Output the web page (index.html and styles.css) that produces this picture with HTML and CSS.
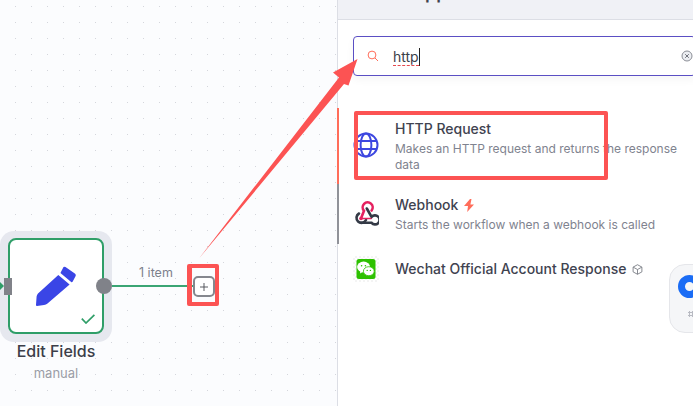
FILE: index.html
```html
<!DOCTYPE html>
<html lang="en">
<head>
<meta charset="utf-8">
<title>Node creator</title>
<link rel="stylesheet" href="styles.css">
</head>
<body>
<div class="app">
  <section class="canvas">
    <div class="halo">
      <div class="node">
        <svg class="pencil" viewBox="0 0 40 40"><path d="M27.500 1 Q28.500 0.300 29.500 1 L38.800 7.500 Q40.300 8.700 39.500 10.300 L36.600 15.800 Q36 16.600 35.200 16 L25 7.600 Q24.300 7 24.800 6.200Z M22.300 9 L33.600 18.400 L11.500 37.500 Q10 38.700 8 38.900 L1 39.900 Q0 40 0 39 L0.600 30.500 Q0.800 28.800 2 27.500Z" fill="#3a45e6"/></svg>
        <svg class="check" viewBox="0 0 14 10"><path d="M0.800 4.600 L5 9 L13.400 0.800" fill="none" stroke="#2f9e68" stroke-width="1.700"/></svg>
      </div>
    </div>
    <span class="port-in"></span>
    <svg class="port-arrow" viewBox="0 0 5 10"><path d="M0 0 L5 5 L0 10Z" fill="#2f9e68"/></svg>
    <span class="port-out"></span>
    <span class="edge"></span>
    <span class="edge-label">1 item</span>
    <span class="plus"><svg class="plus-glyph" viewBox="0 0 10 10"><path d="M5 0 V10 M0 5 H10" stroke="#44474f" stroke-width="1.100"/></svg></span>
    <div class="node-name">Edit Fields</div>
    <div class="node-sub">manual</div>
  </section>
  <aside class="panel">
    <header class="panel-head"><h1>What happens next?</h1></header>
    <div class="search">
      <svg class="search-icon" viewBox="0 0 12 12"><circle cx="5" cy="5" r="3.900" fill="none" stroke="#ff6d5a" stroke-width="1"/><path d="M8 8 L11 11" stroke="#ff6d5a" stroke-width="1"/></svg>
      <span class="query">http</span><span class="caret"></span>
      <svg class="clear" viewBox="0 0 12 12"><circle cx="6" cy="6" r="5" fill="#eceef2" stroke="#8b8e96" stroke-width="1"/><path d="M4.200 4.200 L7.800 7.800 M7.800 4.200 L4.200 7.800" stroke="#6f727a" stroke-width="1"/></svg>
    </div>
    <ul class="list">
      <li class="item item-active">
        <svg class="icon" viewBox="0 0 26 26"><g fill="none" stroke="#3d47e0" stroke-width="2"><circle cx="13" cy="13" r="11.500"/><ellipse cx="13" cy="13" rx="5.400" ry="11.500"/><path d="M2.600 9 H23.400 M2.600 17 H23.400"/></g></svg>
        <div><div class="name">HTTP Request</div><div class="desc">Makes an HTTP request and returns the response data</div></div>
      </li>
      <li class="item item-hover">
        <svg class="icon" viewBox="0 0 26 26"><g fill="none" stroke-width="2.600" stroke-linecap="round"><path d="M13.800 7.500 L18.600 16 A4.500 4.500 0 1 1 18.600 21.800 H8" stroke="#343a46"/><path d="M6 12.500 A5 5 0 1 0 13 19" stroke="#343a46"/><path d="M8 17.500 L11 9.800 A5 5 0 1 1 18.600 9.500" stroke="#e5215f"/><path d="M8 17.500 H18" stroke="#e5215f" stroke-width="1.600"/></g><circle cx="8" cy="17.500" r="1.800" fill="#e5215f"/></svg>
        <div><div class="name">Webhook <svg class="bolt" viewBox="0 0 10 13"><path d="M6 0 L0 7 H4 L3.200 13 L10 5.500 H6.400 L7.500 0Z" fill="#ff6d5a"/></svg></div><div class="desc">Starts the workflow when a webhook is called</div></div>
      </li>
      <li class="item item-plain">
        <svg class="icon tile" viewBox="0 0 26 26"><rect x="3.500" y="3" width="19" height="20" rx="2.500" fill="#2dc100"/><ellipse cx="10.600" cy="11" rx="6.500" ry="5.400" fill="#fff"/><path d="M7.500 14.500 L7 17.500 L10.500 15.500Z" fill="#fff"/><ellipse cx="15.800" cy="15.200" rx="5.400" ry="4.500" fill="#fff" stroke="#2dc100" stroke-width="0.800"/><circle cx="8.600" cy="9.800" r=".8" fill="#2dc100"/><circle cx="12.400" cy="9.800" r=".8" fill="#2dc100"/><circle cx="14.200" cy="14.400" r=".7" fill="#2dc100"/><circle cx="17.400" cy="14.400" r=".7" fill="#2dc100"/></svg>
        <div><div class="name">Wechat Official Account Response <svg class="cube" viewBox="0 0 12 12"><path d="M6 .8 L10.800 3.400 V8.600 L6 11.200 L1.200 8.600 V3.400Z M1.200 3.400 L6 6 L10.800 3.400 M6 6 V11.200" fill="none" stroke="#7d8088" stroke-width="1"/></svg></div></div>
      </li>
    </ul>
    <div class="widget">
      <span class="ring"></span>
      <span class="grip"></span>
    </div>
  </aside>
  <svg class="marks" viewBox="0 0 693 406">
    <path d="M199 258.500 L344 84 L348.500 85.500 L357.500 59 L333 72.500 L339 77.500 Z" fill="#fc5353"/>
  </svg>
  <span class="mark-box mark-http"></span>
  <span class="mark-box mark-plus"></span>
</div>
</body>
</html>
```
FILE: styles.css
```css
* { box-sizing: border-box; }
html, body { margin: 0; height: 100%; overflow: hidden; }
body { font-family: Inter, "Liberation Sans", sans-serif; color: #3f4350; background: #fff; }
.app { position: relative; display: flex; width: 693px; height: 406px; overflow: hidden; }

.canvas {
  position: relative;
  flex: 0 0 337px;
  background-color: #fbfcfe;
  background-image: radial-gradient(circle at 15.500px 6.500px, #d4d6dc 0.7px, transparent 1px);
  background-size: 16px 16px;
}
.halo { position: absolute; left: 0; top: 231px; width: 112px; height: 111px; padding: 7px 8px 8px 8px; background: #e6e8ef; border-radius: 14px; }
.node { position: relative; width: 96px; height: 96px; background: #fff; border: 2px solid #2f9e68; border-radius: 8px; }
.pencil { position: absolute; left: 26px; top: 26px; width: 40px; height: 40px; }
.check { position: absolute; left: 71px; top: 74px; width: 14px; height: 10px; }
.port-in { position: absolute; left: 4px; top: 278px; width: 8px; height: 17px; background: #808289; }
.port-arrow { position: absolute; left: 0; top: 281px; width: 4px; height: 10px; }
.port-out { position: absolute; left: 96px; top: 278px; width: 16px; height: 16px; border-radius: 50%; background: #808289; }
.edge { position: absolute; left: 112px; top: 285px; width: 82px; height: 2px; background: #3ba574; }
.edge-label { position: absolute; left: 139px; top: 265px; font-size: 12.500px; line-height: 16px; color: #7b808c; }
.plus { position: absolute; left: 193px; top: 276px; display: flex; align-items: center; justify-content: center; width: 22px; height: 21px; border: 2px solid #85878e; border-radius: 5px; background: #fff; }
.plus-glyph { width: 8px; height: 8px; }
.node-name { position: absolute; left: 0; top: 342px; width: 112px; text-align: center; font-size: 16px; font-weight: 500; line-height: 18px; color: #3b3e49; }
.node-sub { position: absolute; left: 0; top: 365px; width: 112px; text-align: center; font-size: 13px; line-height: 16px; color: #9a9da6; }

.panel { position: relative; flex: 1; display: flex; flex-direction: column; border-left: 1px solid #dcdee5; background: #fff; }
.panel-head { height: 20px; flex: none; padding-left: 15px; background: #f0f1f6; border-bottom: 1px solid #dcdee5; overflow: hidden; }
.panel-head h1 { margin: -18px 0 0; font-size: 18px; font-weight: 600; line-height: 22px; white-space: nowrap; color: #3f4350; }
.search { flex: none; display: flex; align-items: center; height: 40px; margin: 16px -3px 0 15px; padding: 0 2px 0 13px; border: 1px solid #5b4fc4; border-radius: 4px; box-shadow: 0 4px 8px rgba(30, 30, 60, .04); }
.search-icon { width: 12px; height: 12px; flex: none; margin-right: 14px; }
.query { margin-top: 2px; font-size: 14px; line-height: 17px; color: #3b3e49; border-bottom: 1px dashed #e5484d; }
.caret { width: 1px; height: 18px; margin-top: 2px; background: #222; }
.clear { width: 12px; height: 12px; flex: none; margin-left: auto; }

.list { list-style: none; margin: 32px 0 0; padding: 0; }
.item { display: flex; gap: 16px; padding-left: 14px; margin-left: -1px; border-left: 2px solid transparent; }
.item-active { height: 76px; padding-top: 11px; border-left-color: #ff6d5a; }
.item-hover { height: 60px; padding-top: 11px; border-left-color: #909299; }
.item-plain { height: 50px; padding-top: 15px; }
.icon { width: 26px; height: 26px; flex: none; margin-top: 13px; }
.item-hover .icon { margin-top: 6px; }
.item-plain .icon { margin-top: -3px; }
.tile { background: repeating-conic-gradient(#f4f4f4 0 25%, #fff 0 50%) 0 0 / 4px 4px; }
.name { display: flex; align-items: center; gap: 6px; font-size: 14px; font-weight: 500; line-height: 20px; color: #3f4350; }
.desc { margin-top: 2px; font-size: 12px; line-height: 16px; color: #7f838f; }
.bolt { width: 10px; height: 13px; }
.cube { width: 11px; height: 11px; }

.widget { position: absolute; left: 331px; top: 264px; width: 40px; height: 69px; background: #f5f6f8; border: 1px solid #e5e6ea; border-radius: 16px; }
.ring { position: absolute; left: 8px; top: 10px; width: 23px; height: 23px; border: 7px solid #1a6cf5; border-radius: 50%; }
.grip { position: absolute; left: 18px; top: 46px; width: 6px; height: 6px; background-image: radial-gradient(circle, #b8bac2 1.200px, transparent 1.400px); background-size: 3px 3px; }

.marks { position: absolute; left: 0; top: 0; width: 693px; height: 406px; pointer-events: none; }
.mark-box { position: absolute; border: 4px solid #fc5353; border-radius: 2px; }
.mark-http { left: 354px; top: 111px; width: 254px; height: 69px; }
.mark-plus { left: 187px; top: 264px; width: 32px; height: 42px; border-left-width: 5px; }
```
